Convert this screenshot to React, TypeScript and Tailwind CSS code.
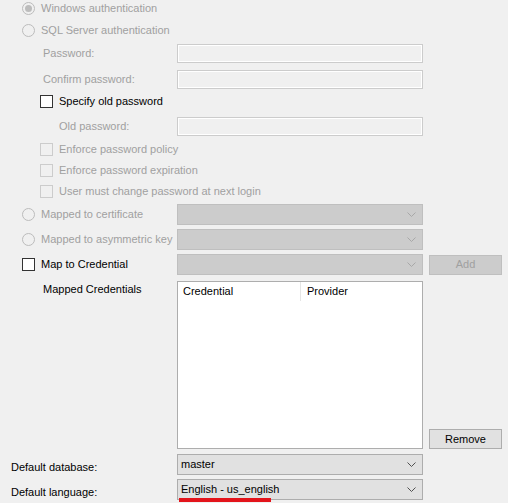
import React from "react";

const dim = "text-[#a0a0a0]";

function Radio({ checked }: { checked?: boolean }) {
  return (
    <div className="w-[13px] h-[13px] rounded-full border border-[#bcbcbc] bg-[#f0f0f0] flex items-center justify-center shrink-0">
      {checked && <div className="w-[7px] h-[7px] rounded-full bg-[#bcbcbc]" />}
    </div>
  );
}

function Check({ disabled }: { disabled?: boolean }) {
  return (
    <div
      className={
        "w-[13px] h-[13px] border shrink-0 " +
        (disabled ? "border-[#cccccc] bg-[#f0f0f0]" : "border-[#333333] bg-white")
      }
    />
  );
}

function Chevron({ color }: { color: string }) {
  return (
    <svg width="9" height="5" viewBox="0 0 9 5" className="shrink-0">
      <path d="M0.5 0.5 L4.5 4.5 L8.5 0.5" fill="none" stroke={color} strokeWidth="1" />
    </svg>
  );
}

function TextBox() {
  return (
    <div className="w-[246px] h-[19px] border border-[#cccccc] bg-[#f0f0f0] shadow-[inset_0_0_0_1px_#ffffff]" />
  );
}

function Combo({ value, enabled }: { value?: string; enabled?: boolean }) {
  return (
    <div
      className={
        "w-[246px] h-[21px] border flex items-center justify-between pl-[3px] pr-[6px] " +
        (enabled ? "bg-[#e1e1e1] border-[#adadad]" : "bg-[#cccccc] border-[#bfbfbf]")
      }
    >
      <span className="text-black">{value}</span>
      <Chevron color={enabled ? "#505050" : "#a8a8a8"} />
    </div>
  );
}

export default function App() {
  return (
    <div className="w-[508px] h-[503px] bg-[#f0f0f0] overflow-hidden text-[11px] leading-[13px] font-['Liberation_Sans',Arial,sans-serif]">
      <div className="flex flex-col">
        <div className="flex items-center h-[16px] pl-[22px] gap-[6px]">
          <Radio checked />
          <span className={dim}>Windows authentication</span>
        </div>
        <div className="flex items-center h-[16px] mt-[6px] pl-[22px] gap-[6px]">
          <Radio />
          <span className={dim}>SQL Server authentication</span>
        </div>
        <div className="flex items-center h-[19px] mt-[6px]">
          <span className={"w-[177px] pl-[43px] " + dim}>Password:</span>
          <TextBox />
        </div>
        <div className="flex items-center h-[19px] mt-[7px]">
          <span className={"w-[177px] pl-[43px] " + dim}>Confirm password:</span>
          <TextBox />
        </div>
        <div className="flex items-center h-[13px] mt-[6px] pl-[40px] gap-[6px]">
          <Check />
          <span className="text-black">Specify old password</span>
        </div>
        <div className="flex items-center h-[19px] mt-[9px]">
          <span className={"w-[177px] pl-[59px] " + dim}>Old password:</span>
          <TextBox />
        </div>
        <div className="flex items-center h-[13px] mt-[7px] pl-[40px] gap-[6px]">
          <Check disabled />
          <span className={dim}>Enforce password policy</span>
        </div>
        <div className="flex items-center h-[13px] mt-[8px] pl-[40px] gap-[6px]">
          <Check disabled />
          <span className={dim}>Enforce password expiration</span>
        </div>
        <div className="flex items-center h-[13px] mt-[8px] pl-[40px] gap-[6px]">
          <Check disabled />
          <span className={dim}>User must change password at next login</span>
        </div>
        <div className="flex items-center h-[21px] mt-[6px]">
          <div className="w-[177px] pl-[22px] flex items-center gap-[6px]">
            <Radio />
            <span className={dim}>Mapped to certificate</span>
          </div>
          <Combo />
        </div>
        <div className="flex items-center h-[21px] mt-[4px]">
          <div className="w-[177px] pl-[22px] flex items-center gap-[6px]">
            <Radio />
            <span className={dim}>Mapped to asymmetric key</span>
          </div>
          <Combo />
        </div>
        <div className="flex items-center h-[21px] mt-[4px]">
          <div className="w-[177px] pl-[22px] flex items-center gap-[6px]">
            <Check />
            <span className="text-black">Map to Credential</span>
          </div>
          <Combo />
          <div className="ml-[6px] w-[73px] h-[20px] border border-[#bfbfbf] bg-[#cccccc] flex items-center justify-center text-[#a0a0a0]">
            Add
          </div>
        </div>
        <div className="flex mt-[6px]">
          <div className="w-[177px] pl-[43px] pt-[2px] text-black">Mapped Credentials</div>
          <div className="w-[246px] h-[168px] border border-[#adadad] bg-white flex flex-col">
            <div className="flex h-[19px] items-center">
              <span className="w-[123px] pl-[5px] h-full flex items-center border-r border-[#e5e5e5]">Credential</span>
              <span className="pl-[6px]">Provider</span>
            </div>
          </div>
          <div className="flex flex-col justify-end ml-[6px]">
            <div className="w-[73px] h-[20px] border border-[#adadad] bg-[#e1e1e1] flex items-center justify-center text-black">
              Remove
            </div>
          </div>
        </div>
        <div className="flex items-center h-[21px] mt-[5px]">
          <span className="w-[177px] pl-[11px] pt-[6px] text-black">Default database:</span>
          <Combo value="master" enabled />
        </div>
        <div className="flex items-center h-[21px] mt-[4px]">
          <span className="w-[177px] pl-[11px] pt-[6px] text-black">Default language:</span>
          <div className="relative">
            <Combo value="English - us_english" enabled />
            <div className="absolute left-[2px] top-[19px] w-[92px] h-[4px] bg-[#e3141b]" />
          </div>
        </div>
      </div>
    </div>
  );
}
